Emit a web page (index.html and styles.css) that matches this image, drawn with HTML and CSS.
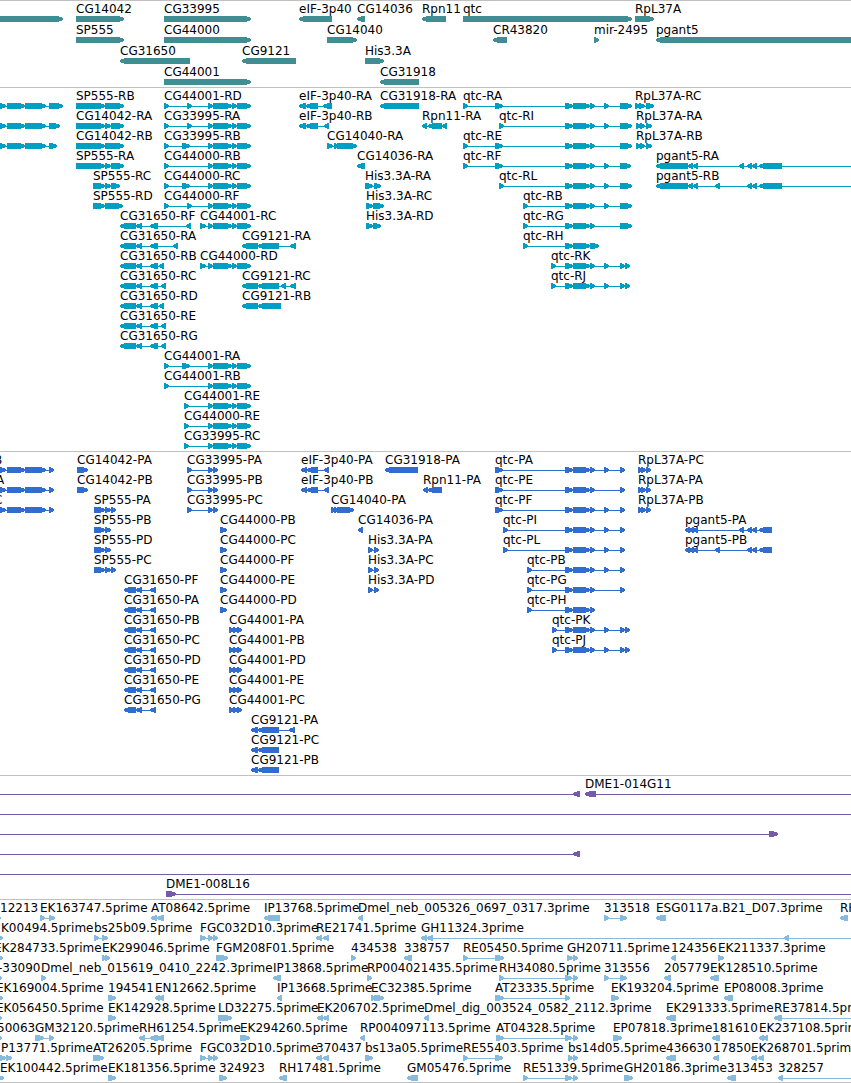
FILE: index.html
```html
<!DOCTYPE html>
<html lang="en">

<head>
    <meta charset="UTF-8">
    <meta name="viewport" content="width=device-width, initial-scale=1.0">
    <title>Genome Browser</title>
    <link rel="stylesheet" href="styles.css">
</head>

<body>
    <!-- the rows of every track are filled in by tracks.js -->
    <main id="browser">
        <section class="track genes" id="genes"></section>
        <section class="track transcripts" id="transcripts"></section>
        <section class="track proteins" id="proteins"></section>
        <section class="track clones" id="clones"></section>
        <section class="track ests" id="ests"></section>
    </main>
    <script src="tracks.js"></script>
</body>

</html>
```

FILE: styles.css
```css
body {
    margin: 0;
    background-color: white;
    color: black;
    font-family: "DejaVu Sans", sans-serif;
    font-size: 12px;
    line-height: 14px;
}

#browser {
    overflow: hidden;
    border-bottom: 1px solid #c0c0c0;
}

.track {
    border-top: 1px solid #c0c0c0;
    padding-bottom: 3px;
}

/* one line of features: label on top, glyph below it */
.row {
    position: relative;
    box-sizing: border-box;
    height: 20px;
    padding-top: 15px;
}

.label {
    position: absolute;
    top: 1px;
    white-space: pre;
}

.glyphs {
    display: block;
    width: 100%;
    height: 6px;
    shape-rendering: crispEdges;
}

.genes {
    fill: #408e93;
    padding-bottom: 2px;
}

.genes .row {
    height: 21px;
}

.transcripts {
    fill: #009fc1;
}

.proteins {
    fill: #316dce;
}

.clones {
    fill: #7759a9;
}

.ests {
    fill: #87bbde;
    padding-bottom: 2px;
}
```

FILE: tracks.js
```js
// feature: [name, strand, exons, label position if it is not the first exon]
const tail = " 208..213 213..232 232..237 237..251"
const cg31650 = "120..136 136..142 150..158 "
const qtcMid = " 565..573 573..590 590..595"
const qtcMid2 = qtcMid + " 604..609"
const pgant = "656..688 688..693 693..698 "
const pgantEnd = " 747..752 752..757 759..782 2000..2005"
const left = "-4..6 7..25 25..46 "

const tracks = {
    genes: [
        [["", "+", "-20..63"], ["CG14042", "+", "76..124"], ["CG33995", "+", "164..251"], ["eIF-3p40", "-", "299..332"], ["CG14036", "-", "357..365"], ["Rpn11", "-", "422..446"], ["qtc", "+", "463..632"], ["RpL37A", "+", "635..654"]],
        [["SP555", "+", "76..124"], ["CG44000", "+", "164..251"], ["CG14040", "+", "327..357"], ["CR43820", "-", "493..507"], ["mir-2495", "+", "594..599"], ["pgant5", "-", "656..2000"]],
        [["CG31650", "-", "120..190"], ["CG9121", "-", "242..296"], ["His3.3A", "+", "365..384"]],
        [["CG44001", "+", "164..251"], ["CG31918", "-", "380..419"]]
    ],
    transcripts: [
        [["", "+", left + "49..63"], ["SP555-RB", "+", "76..105 105..124"], ["CG44001-RD", "+", "164..169 187..192" + tail], ["eIF-3p40-RA", "-", "299..306 306..318 323..332"], ["CG31918-RA", "-", "380..419"], ["qtc-RA", "+", "463..468 495..503" + qtcMid2 + " 620..632"], ["RpL37A-RC", "+", "635..640 639..645 646..654"]],
        [["", "+", left + "49..60"], ["CG14042-RA", "+", "76..105 105..111 111..124"], ["CG33995-RA", "+", "164..169 187..192" + tail], ["eIF-3p40-RB", "-", "299..306 306..318 324..329"], ["Rpn11-RA", "-", "422..427 428..442 442..447"], ["qtc-RI", "+", "499..504" + qtcMid2 + " 620..632"], ["RpL37A-RA", "+", "636..641 640..645 646..652"]],
        [["", "+", left + "49..57"], ["CG14042-RB", "+", "76..105 105..124"], ["CG33995-RB", "+", "164..169 182..190" + tail], ["CG14040-RA", "+", "327..333 334..338 337..357"], ["qtc-RE", "+", "463..468 495..503" + qtcMid + " 620..632"], ["RpL37A-RB", "+", "636..641 640..645 646..652"]],
        [["SP555-RA", "+", "76..105 105..111 111..124"], ["CG44000-RB", "+", "164..169" + tail], ["CG14036-RA", "-", "357..365"], ["qtc-RF", "+", "463..468 495..503" + qtcMid2 + " 620..631"], ["pgant5-RA", "-", pgant + "739..744" + pgantEnd]],
        [["SP555-RC", "+", "93..105 105..111 111..120"], ["CG44000-RC", "+", "164..169 182..190" + tail], ["His3.3A-RA", "+", "365..373 374..381"], ["qtc-RL", "+", "499..504" + qtcMid2 + " 620..632"], ["pgant5-RB", "-", pgant + "715..720" + pgantEnd]],
        [["SP555-RD", "+", "93..105 105..123"], ["CG44000-RF", "+", "164..169 187..192" + tail], ["His3.3A-RC", "+", "366..373 373..384"], ["qtc-RB", "+", "523..528" + qtcMid2 + " 620..632"]],
        [["CG31650-RF", "-", cg31650 + "186..191"], ["CG44001-RC", "+", "200..206" + tail], ["His3.3A-RD", "+", "366..373 373..381"], ["qtc-RG", "+", "523..528" + qtcMid + " 620..632"]],
        [["CG31650-RA", "-", cg31650 + "173..178"], ["CG9121-RA", "-", "242..258 258..279 290..296"], ["qtc-RH", "+", "523..528 565..573 573..590 590..599"]],
        [["CG31650-RB", "-", cg31650 + "159..164"], ["CG44000-RD", "+", "200..206" + tail], ["qtc-RK", "+", "551..556" + qtcMid2 + " 620..625 625..630"]],
        [["CG31650-RC", "-", cg31650 + "161..166"], ["CG9121-RC", "-", "242..258 258..279 281..286 290..296"], ["qtc-RJ", "+", "551..556" + qtcMid2 + " 620..625 625..630"]],
        [["CG31650-RD", "-", cg31650 + "159..164"], ["CG9121-RB", "-", "242..258 258..281"]],
        [["CG31650-RE", "-", cg31650 + "161..166"]],
        [["CG31650-RG", "-", cg31650 + "161..166"]],
        [["CG44001-RA", "+", "164..169 182..190" + tail]],
        [["CG44001-RB", "+", "164..169" + tail]],
        [["CG44001-RE", "+", "184..189" + tail]],
        [["CG44000-RE", "+", "184..189" + tail]],
        [["CG33995-RC", "+", "184..189" + tail]]
    ],
    proteins: [
        [["B", "+", left + "49..54", -6], ["CG14042-PA", "+", "77..88"], ["CG33995-PA", "+", "187..192 208..213 213..218"], ["eIF-3p40-PA", "-", "301..307 307..318 324..329"], ["CG31918-PA", "-", "385..418"], ["qtc-PA", "+", "495..503" + qtcMid2 + " 620..625"], ["RpL37A-PC", "+", "638..643 641..646 646..651"]],
        [["A", "+", left + "49..54", -4], ["CG14042-PB", "+", "77..88"], ["CG33995-PB", "+", "187..192 208..213 213..218"], ["eIF-3p40-PB", "-", "301..307 307..318 324..329"], ["Rpn11-PA", "-", "423..428 428..442"], ["qtc-PE", "+", "495..503" + qtcMid + " 620..625"], ["RpL37A-PA", "+", "638..643 641..646 646..651"]],
        [["C", "+", left + "49..54", -6], ["SP555-PA", "+", "94..105 105..111 111..116"], ["CG33995-PC", "+", "187..192 208..213 213..218"], ["CG14040-PA", "+", "331..335 334..338 337..354"], ["qtc-PF", "+", "495..503" + qtcMid2 + " 620..625"], ["RpL37A-PB", "+", "638..643 641..646 646..651"]],
        [["SP555-PB", "+", "94..105 105..111"], ["CG44000-PB", "+", "220..227"], ["CG14036-PA", "-", "358..363"], ["qtc-PI", "+", "503..508" + qtcMid2 + " 620..625"], ["pgant5-PA", "-", "685..690 689..694 693..698 739..744 747..752 752..757 759..772"]],
        [["SP555-PD", "+", "94..105 105..111"], ["CG44000-PC", "+", "220..227"], ["His3.3A-PA", "+", "368..373 374..379"], ["qtc-PL", "+", "503..508" + qtcMid2 + " 620..625"], ["pgant5-PB", "-", "685..690 689..694 693..698 715..720 747..752 752..757 759..772"]],
        [["SP555-PC", "+", "94..105 105..111 111..116"], ["CG44000-PF", "+", "220..227"], ["His3.3A-PC", "+", "368..373 374..379"], ["qtc-PB", "+", "527..532" + qtcMid2 + " 620..625"]],
        [["CG31650-PF", "-", "124..136 136..142 150..156"], ["CG44000-PE", "+", "220..227"], ["His3.3A-PD", "+", "368..373 374..379"], ["qtc-PG", "+", "527..532" + qtcMid + " 620..625"]],
        [["CG31650-PA", "-", "124..136 136..142 150..156"], ["CG44000-PD", "+", "220..227"], ["qtc-PH", "+", "527..532" + qtcMid]],
        [["CG31650-PB", "-", "124..136 136..142 150..156"], ["CG44001-PA", "+", "229..234 233..238 237..242"], ["qtc-PK", "+", "552..557" + qtcMid2 + " 620..625 625..630"]],
        [["CG31650-PC", "-", "124..136 136..142 150..156"], ["CG44001-PB", "+", "229..234 233..238 237..242"], ["qtc-PJ", "+", "552..557" + qtcMid2 + " 620..625 625..630"]],
        [["CG31650-PD", "-", "124..136 136..142 150..156"], ["CG44001-PD", "+", "229..234 233..238 237..242"]],
        [["CG31650-PE", "-", "124..136 136..142 150..156"], ["CG44001-PE", "+", "229..234 233..238 237..242"]],
        [["CG31650-PG", "-", "124..136 136..142 150..156"], ["CG44001-PC", "+", "229..234 233..238 237..242"]],
        [["CG9121-PA", "-", "251..258 258..279 289..295"]],
        [["CG9121-PC", "-", "251..258 258..279"]],
        [["CG9121-PB", "-", "251..258 258..279"]]
    ],
    clones: [
        [["", "-", "-20..-10 573..580"], ["DME1-014G11", "-", "585..596 2000..2005"]],
        [["", "+", "-20..-10 2000..2005"]],
        [["", "+", "-20..-10 769..778"]],
        [["", "-", "-20..-10 573..580"]],
        [["", "+", "-20..-10 2000..2005"]],
        [["DME1-008L16", "+", "166..176 2000..2005"]]
    ],
    ests: [
        [["12213", "+", "-5..1", 0], ["EK163747.5prime", "+", "40..45 49..55"], ["AT08642.5prime", "-", "151..157 157..164"], ["IP13768.5prime", "-", "264..280"], ["Dmel_neb_005326_0697_0317.3prime", "-", "358..363"], ["313518", "+", "604..609 620..627"], ["ESG0117a.B21_D07.3prime", "-", "656..666"], ["RH", "-", "840..848"]],
        [["K00494.5prime", "+", "-4..3", 1], ["bs25b09.5prime", "+", "94..99 102..108"], ["FGC032D10.3prime", "+", "200..206 208..213 213..218"], ["RE21741.5prime", "-", "316..322 323..329"], ["GH11324.3prime", "-", "421..427 427..433 784..789 2000..2005"]],
        [["EK284733.5prime", "+", "-4..3", -6], ["EK299046.5prime", "+", "102..106 105..110"], ["FGM208F01.5prime", "+", "216..228"], ["434538", "+", "351..356"], ["338757", "-", "404..412"], ["RE05450.5prime", "+", "463..468 495..504"], ["GH20711.5prime", "+", "567..573 573..578"], ["124356", "-", "671..676"], ["EK211337.3prime", "+", "718..724"]],
        [["-33090", "+", "-4..2", -2], ["Dmel_neb_015619_0410_2242.3prime", "+", "41..46"], ["IP13868.5prime", "-", "273..281"], ["RP004021435.5prime", "+", "367..372"], ["RH34080.5prime", "+", "499..504 565..572 573..578"], ["313556", "+", "604..609 620..627"], ["205779", "-", "664..671"], ["EK128510.5prime", "-", "710..719"]],
        [["EK169004.5prime", "+", "-4..3", -4], ["194541", "+", "108..116"], ["EN12662.5prime", "-", "155..160 159..164"], ["IP13668.5prime", "-", "277..282"], ["EC32385.5prime", "+", "371..376 374..384"], ["AT23335.5prime", "+", "495..504 565..570"], ["EK193204.5prime", "+", "611..619"], ["EP08008.3prime", "-", "724..733"]],
        [["EK056450.5prime", "+", "-4..2", -4], ["EK142928.5prime", "+", "108..116"], ["LD32275.5prime", "+", "218..232"], ["EK206702.5prime", "-", "317..323 323..329"], ["Dmel_dig_003524_0582_2112.3prime", "-", "424..429"], ["EK291333.5prime", "-", "666..676"], ["RE37814.5prime", "-", "774..782 2000..2005"]],
        [["50063", "+", "-4..2", -3], ["GM32120.5prime", "+", "35..44 49..54"], ["RH61254.5prime", "-", "139..145 150..158 157..164"], ["EK294260.5prime", "+", "240..250"], ["RP004097113.5prime", "-", "360..365"], ["AT04328.5prime", "+", "496..504 565..572 573..578"], ["EP07818.3prime", "+", "613..622"], ["181610", "-", "712..720"], ["EK237108.5prime", "-", "759..764 763..768"]],
        [["P13771.5prime", "+", "-3..6 6..12", 1], ["AT26205.5prime", "+", "93..104"], ["FGC032D10.5prime", "+", "200..206 208..213 213..218"], ["370437", "-", "316..322 323..329"], ["bs13a05.5prime", "+", "365..373"], ["RE55403.5prime", "+", "463..468 495..503"], ["bs14d05.5prime", "+", "568..573 573..578"], ["436630", "-", "666..676"], ["17850", "-", "713..719"], ["EK268701.5prime", "-", "751..757 758..764"]],
        [["EK100442.5prime", "+", "-4..4", 0], ["EK181356.5prime", "+", "108..116"], ["324923", "+", "219..227"], ["RH17481.5prime", "-", "279..287"], ["GM05476.5prime", "-", "407..418"], ["RE51339.5prime", "+", "523..528 565..572 573..578"], ["GH20186.3prime", "+", "624..633"], ["313453", "-", "727..736"], ["328257", "-", "778..783 2000..2005"]]
    ]
}

// exon as an arrow pointing along its strand
function arrow(a, b, strand) {
    let tip = Math.min(5, b - a - 1)
    if (strand === "+") {
        return `<polygon points="${a},0 ${b - tip},0 ${b},2 ${b},4 ${b - tip},6 ${a},6"/>`
    }
    return `<polygon points="${b},0 ${a + tip},0 ${a},2 ${a},4 ${a + tip},6 ${b},6"/>`
}

for (let id in tracks) {
    let track = document.getElementById(id)
    tracks[id].forEach((features) => {
        let labels = ""
        let shapes = ""
        features.forEach(([name, strand, text, labelX]) => {
            let exons = text.trim().split(" ").map((e) => e.split("..").map(Number))
            let start = exons[0][0]
            let end = exons[exons.length - 1][1]
            // intron line
            if (exons.length > 1) {
                shapes += `<rect x="${start}" y="3" width="${end - start}" height="1"/>`
            }
            exons.forEach(([a, b]) => {
                shapes += arrow(a, b, strand)
            })
            if (name) {
                labels += `<span class="label" style="left:${labelX ?? start}px">${name}</span>`
            }
        })
        let row = document.createElement("div")
        row.classList.add("row")
        row.innerHTML = labels + `<svg class="glyphs">${shapes}</svg>`
        track.append(row)
    })
}
```
